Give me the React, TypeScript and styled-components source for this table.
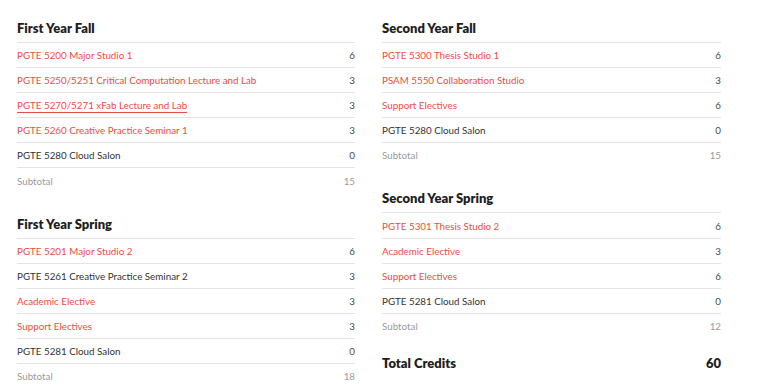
import styled, { createGlobalStyle } from 'styled-components';

type Course = {
  name: string;
  credits: number;
  link?: boolean;
  hover?: boolean;
};

type Term = {
  title: string;
  courses: Course[];
  subtotal: number;
};

const leftTerms: Term[] = [
  {
    title: 'First Year Fall',
    courses: [
      { name: 'PGTE 5200 Major Studio 1', credits: 6, link: true },
      { name: 'PGTE 5250/5251 Critical Computation Lecture and Lab', credits: 3, link: true },
      { name: 'PGTE 5270/5271 xFab Lecture and Lab', credits: 3, link: true, hover: true },
      { name: 'PGTE 5260 Creative Practice Seminar 1', credits: 3, link: true },
      { name: 'PGTE 5280 Cloud Salon', credits: 0 },
    ],
    subtotal: 15,
  },
  {
    title: 'First Year Spring',
    courses: [
      { name: 'PGTE 5201 Major Studio 2', credits: 6, link: true },
      { name: 'PGTE 5261 Creative Practice Seminar 2', credits: 3 },
      { name: 'Academic Elective', credits: 3, link: true },
      { name: 'Support Electives', credits: 3, link: true },
      { name: 'PGTE 5281 Cloud Salon', credits: 0 },
    ],
    subtotal: 18,
  },
];

const rightTerms: Term[] = [
  {
    title: 'Second Year Fall',
    courses: [
      { name: 'PGTE 5300 Thesis Studio 1', credits: 6, link: true },
      { name: 'PSAM 5550 Collaboration Studio', credits: 3, link: true },
      { name: 'Support Electives', credits: 6, link: true },
      { name: 'PGTE 5280 Cloud Salon', credits: 0 },
    ],
    subtotal: 15,
  },
  {
    title: 'Second Year Spring',
    courses: [
      { name: 'PGTE 5301 Thesis Studio 2', credits: 6, link: true },
      { name: 'Academic Elective', credits: 3, link: true },
      { name: 'Support Electives', credits: 6, link: true },
      { name: 'PGTE 5281 Cloud Salon', credits: 0 },
    ],
    subtotal: 12,
  },
];

const GlobalStyle = createGlobalStyle`
  body {
    margin: 0;
    background: #ffffff;
    font-family: Lato, 'Open Sans', Arial, sans-serif;
  }
`;

const TermTable = ({ term }: { term: Term }) => (
  <Section>
    <Heading>{term.title}</Heading>
    {term.courses.map((c, i) => (
      <Row key={i}>
        <CourseName link={c.link} hover={c.hover}>
          {c.name}
        </CourseName>
        <Credits>{c.credits}</Credits>
      </Row>
    ))}
    <Row>
      <SubtotalText>Subtotal</SubtotalText>
      <SubtotalText>{term.subtotal}</SubtotalText>
    </Row>
  </Section>
);

export default function App() {
  return (
    <>
      <GlobalStyle />
      <Page>
        <Column>
          {leftTerms.map((t) => (
            <TermTable key={t.title} term={t} />
          ))}
        </Column>
        <Column>
          {rightTerms.map((t) => (
            <TermTable key={t.title} term={t} />
          ))}
          <TotalRow>
            <span>Total Credits</span>
            <span>60</span>
          </TotalRow>
        </Column>
      </Page>
    </>
  );
}

const Page = styled.div`
  width: 771px;
  height: 392px;
  box-sizing: border-box;
  padding: 0 50px 0 17px;
  display: grid;
  grid-template-columns: 338px 339px;
  column-gap: 27px;
  overflow: hidden;
`;

const Column = styled.div`
  display: flex;
  flex-direction: column;
  gap: 3px;
`;

const Section = styled.div`
  display: flex;
  flex-direction: column;
`;

const Heading = styled.h3`
  margin: 0;
  height: 42px;
  box-sizing: border-box;
  display: flex;
  align-items: flex-end;
  padding-bottom: 6px;
  font-size: 13px;
  line-height: 16px;
  font-weight: 800;
  color: #1f1f1f;
`;

const Row = styled.div`
  height: 25.1px;
  box-sizing: border-box;
  border-top: 1px solid #e4e4e4;
  display: flex;
  align-items: center;
  justify-content: space-between;
  font-size: 9.8px;
  line-height: 24px;
`;

const CourseName = styled.span<{ link?: boolean; hover?: boolean }>`
  color: ${(p) => (p.link ? '#ea4d44' : '#333333')};
  text-decoration: ${(p) => (p.hover ? 'underline' : 'none')};
  text-underline-offset: 3px;
  text-decoration-thickness: 1px;
`;

const Credits = styled.span`
  color: #4a4a4a;
`;

const SubtotalText = styled.span`
  color: #9a9a9a;
`;

const TotalRow = styled.div`
  margin-top: 14px;
  display: flex;
  justify-content: space-between;
  font-size: 13px;
  line-height: 16px;
  font-weight: 800;
  color: #1f1f1f;
`;
